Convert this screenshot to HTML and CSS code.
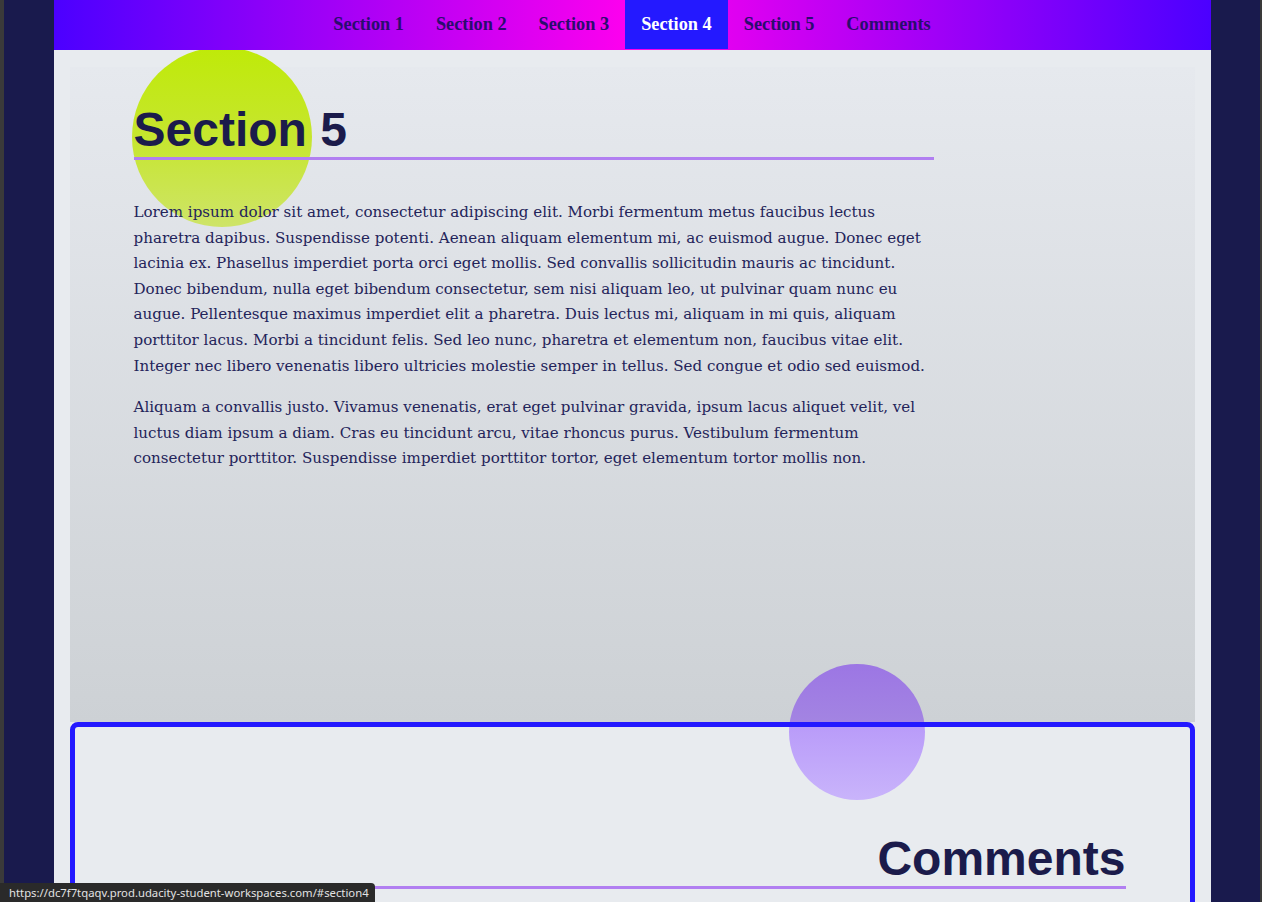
FILE: index.html
```html
<!DOCTYPE html>
<html lang="en">
<head>
<meta charset="utf-8">
<title>Landing Page</title>
<link rel="stylesheet" href="styles.css">
</head>
<body>
<div class="page">
  <header class="navbar">
    <ul class="navbar__list">
      <li><a class="menu__link" href="#section1">Section 1</a></li>
      <li><a class="menu__link" href="#section2">Section 2</a></li>
      <li><a class="menu__link" href="#section3">Section 3</a></li>
      <li><a class="menu__link menu__link--active" href="#section4">Section 4</a></li>
      <li><a class="menu__link" href="#section5">Section 5</a></li>
      <li><a class="menu__link" href="#comments">Comments</a></li>
    </ul>
  </header>
  <main class="main">
    <section class="section section--active" id="section5">
      <span class="blob blob--lime"></span>
      <div class="landing__container">
        <h2 class="section__title">Section 5</h2>
        <p class="section__text">Lorem ipsum dolor sit amet, consectetur adipiscing elit. Morbi fermentum metus faucibus lectus pharetra dapibus. Suspendisse potenti. Aenean aliquam elementum mi, ac euismod augue. Donec eget lacinia ex. Phasellus imperdiet porta orci eget mollis. Sed convallis sollicitudin mauris ac tincidunt. Donec bibendum, nulla eget bibendum consectetur, sem nisi aliquam leo, ut pulvinar quam nunc eu augue. Pellentesque maximus imperdiet elit a pharetra. Duis lectus mi, aliquam in mi quis, aliquam porttitor lacus. Morbi a tincidunt felis. Sed leo nunc, pharetra et elementum non, faucibus vitae elit. Integer nec libero venenatis libero ultricies molestie semper in tellus. Sed congue et odio sed euismod.</p>
        <p class="section__text">Aliquam a convallis justo. Vivamus venenatis, erat eget pulvinar gravida, ipsum lacus aliquet velit, vel luctus diam ipsum a diam. Cras eu tincidunt arcu, vitae rhoncus purus. Vestibulum fermentum consectetur porttitor. Suspendisse imperdiet porttitor tortor, eget elementum tortor mollis non.</p>
      </div>
      <span class="blob blob--violet"></span>
    </section>
    <section class="section section--comments" id="comments">
      <div class="landing__container comments__container">
        <h2 class="section__title">Comments</h2>
      </div>
    </section>
  </main>
</div>
<div class="status-bar">https://dc7f7tqaqv.prod.udacity-student-workspaces.com/#section4</div>
</body>
</html>
```
FILE: styles.css
```css
html, body {
  margin: 0;
  padding: 0;
}

body {
  box-sizing: border-box;
  height: 902px;
  overflow: hidden;
  background: #191a4d;
  border-left: 4px solid #3a3a3a;
  border-right: 2px solid #3a3a3a;
  font-family: "DejaVu Serif", serif;
}

.page {
  width: 1157px;
  margin: 0 auto;
  min-height: 902px;
  background: #e8ebef;
}

.navbar {
  position: relative;
  z-index: 5;
  height: 50px;
  background: linear-gradient(90deg, #4b00ff 0%, #ff00ee 50%, #4b00ff 100%);
}

.navbar__list {
  display: flex;
  justify-content: center;
  margin: 0;
  padding: 0;
  list-style: none;
}

.menu__link {
  display: block;
  padding: 16px;
  font-family: "Liberation Serif", serif;
  font-weight: bold;
  font-size: 18.3px;
  line-height: 17px;
  color: #2a0c6e;
  text-decoration: none;
}

.menu__link--active {
  background: #2419ff;
  color: #ffffff;
}

.main {
  padding: 17px 16px 0;
}

.section {
  position: relative;
}

.section--active {
  height: 655px;
  background: linear-gradient(180deg, #e6e9ee 0%, #cdd1d5 100%);
}

.landing__container {
  position: relative;
  z-index: 1;
  width: 800px;
  padding: 35px 64px 0;
}

.section__title {
  margin: 0 0 40px;
  font-family: "Liberation Sans", Arial, sans-serif;
  font-weight: bold;
  font-size: 48px;
  line-height: 55px;
  color: #1b1b4b;
  border-bottom: 3px solid #b17ff1;
}

.section__text {
  margin: 16px 0;
  font-size: 15.1px;
  line-height: 25.6px;
  color: #24245a;
}

.blob {
  position: absolute;
  z-index: 0;
  border-radius: 50%;
}

.blob--lime {
  left: 62px;
  top: -20px;
  width: 180px;
  height: 180px;
  background: linear-gradient(180deg, #bfea08 0%, #c6e62e 50%, #cee468 100%);
}

.blob--violet {
  left: 719px;
  top: 597px;
  width: 136px;
  height: 136px;
  background: linear-gradient(180deg, #9c76e4 0, #a384e2 58px, #b89af9 58px, #c9b4fb 100%);
}

.section--comments {
  z-index: 1;
  min-height: 400px;
  border: 5px solid #2419ff;
  border-radius: 8px;
}

.comments__container {
  width: auto;
  padding-top: 104px;
  text-align: right;
}

.status-bar {
  position: fixed;
  left: 0;
  bottom: 0;
  z-index: 20;
  height: 19px;
  padding: 0 6px 0 9px;
  background: #2a2a2a;
  border-top-right-radius: 4px;
  font-family: "Noto Sans", sans-serif;
  font-size: 11.3px;
  line-height: 19px;
  color: #e2e2e2;
  white-space: nowrap;
}
```
